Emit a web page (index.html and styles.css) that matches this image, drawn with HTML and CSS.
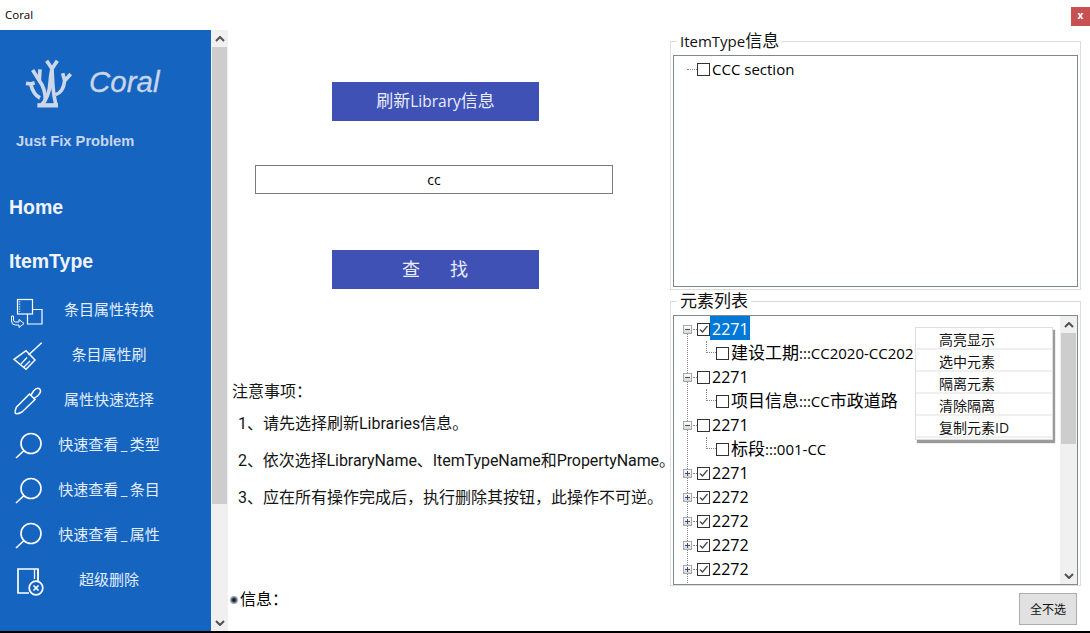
FILE: index.html
```html
<!DOCTYPE html>
<html lang="zh-CN">
<head>
<meta charset="utf-8">
<title>Coral</title>
<link rel="stylesheet" href="styles.css">
</head>
<body>
<div class="app">
  <header class="titlebar">
    <span class="title">Coral</span>
    <button class="close">x</button>
  </header>
  <div class="window">
    <aside class="sidebar">
      <div class="brand">
        <svg class="logo" viewBox="0 0 180 210" width="60" height="70" fill="none" stroke="#cdd7ea" stroke-width="11">
          <path d="M64 166 Q88 140 90 100 Q91 80 96 56 Q98 110 102 136 L108 166"/>
          <path d="M80 32 L96 56 L112 32"/>
          <path d="M76 150 Q76 116 58 92 L38 60 M58 92 L60 58"/>
          <path d="M60 144 Q40 134 32 102 L18 100 M32 102 L44 98"/>
          <path d="M106 134 Q130 128 134 92 L152 72 M134 92 L128 70"/>
          <path d="M52 166 L114 166" stroke-width="13"/>
        </svg>
        <span class="brand-name">Coral</span>
      </div>
      <div class="tagline">Just Fix Problem</div>
      <div class="section">Home</div>
      <div class="section">ItemType</div>
      <nav class="nav">
        <a class="nav-item">
          <svg class="nav-icon" viewBox="0 0 40 45" fill="none" stroke="#fff" stroke-width="1.2">
            <rect x="7.5" y="11.5" width="15" height="14.5"/>
            <path d="M22.5 21.5 H32 V36 H17.5 V26"/>
            <path d="M9.5 13 v11" stroke="#9fc0ea" stroke-width="1.5" stroke-dasharray="1.5 1"/>
            <path d="M3.5 28 v4 a2 2 0 0 0 2 2 h3.5 v-2.5 l5 4 l-5 4 v-2.5 h-3.5 a4 4 0 0 1 -4 -4 v-5 z" stroke-width="1"/>
          </svg>
          <span class="nav-label">条目属性转换</span>
        </a>
        <a class="nav-item">
          <svg class="nav-icon" viewBox="0 0 40 45" fill="none" stroke="#fff" stroke-width="1.5">
            <path d="M31.7 9.7 L18.5 22"/>
            <path d="M4 26.3 L16 17.7 L25 27 L16 36.3 Z"/>
            <path d="M11 31 L17 24.5 M14 34 L20 28" stroke-width="1.2"/>
          </svg>
          <span class="nav-label">条目属性刷</span>
        </a>
        <a class="nav-item">
          <svg class="nav-icon" viewBox="0 0 40 45" fill="none" stroke="#fff" stroke-width="1.5">
            <path d="M6.5 29 L19.5 16 L25 21.5 L12 34 Q7 36.5 5.5 35.5 Q4.5 33.5 6.5 29 Z"/>
            <path d="M21 17 L23.5 13 Q27 9 29.7 11 Q32 13.5 28 17.5 L24 20.5"/>
          </svg>
          <span class="nav-label">属性快速选择</span>
        </a>
        <a class="nav-item">
          <svg class="nav-icon" viewBox="0 0 40 45" fill="none" stroke="#fff" stroke-width="1.6">
            <circle cx="21" cy="20.5" r="10"/>
            <path d="M14 27.5 L6 35"/>
          </svg>
          <span class="nav-label">快速查看<span class="us">_</span>类型</span>
        </a>
        <a class="nav-item">
          <svg class="nav-icon" viewBox="0 0 40 45" fill="none" stroke="#fff" stroke-width="1.6">
            <circle cx="21" cy="20.5" r="10"/>
            <path d="M14 27.5 L6 35"/>
          </svg>
          <span class="nav-label">快速查看<span class="us">_</span>条目</span>
        </a>
        <a class="nav-item">
          <svg class="nav-icon" viewBox="0 0 40 45" fill="none" stroke="#fff" stroke-width="1.6">
            <circle cx="21" cy="20.5" r="10"/>
            <path d="M14 27.5 L6 35"/>
          </svg>
          <span class="nav-label">快速查看<span class="us">_</span>属性</span>
        </a>
        <a class="nav-item">
          <svg class="nav-icon" viewBox="0 0 40 45" fill="none" stroke="#fff" stroke-width="1.7">
            <path d="M19 35 H8 V11 H28 V23"/>
            <path d="M24.5 11 V21 M28 11 V21" stroke-width="1.3"/>
            <circle cx="26" cy="30" r="6.8"/>
            <path d="M23.5 27.5 L28.5 32.5 M28.5 27.5 L23.5 32.5"/>
          </svg>
          <span class="nav-label">超级删除</span>
        </a>
      </nav>
    </aside>

    <div class="vscroll">
      <div class="sb-btn"><svg width="10" height="6" viewBox="0 0 10 6" fill="none" stroke="#505050" stroke-width="2"><path d="M1 5 L5 1 L9 5"/></svg></div>
      <div class="sb-thumb main-thumb"></div>
      <div class="sb-track"></div>
      <div class="sb-btn"><svg width="10" height="6" viewBox="0 0 10 6" fill="none" stroke="#505050" stroke-width="2"><path d="M1 1 L5 5 L9 1"/></svg></div>
    </div>

    <main class="center">
      <button class="action first">刷新<span class="lat-btn">Library</span>信息</button>
      <input class="search" value="cc">
      <button class="action second">查&emsp;&ensp;找</button>
      <p class="note-title">注意事项：</p>
      <p class="note note-one">1、请先选择刷新Libraries信息。</p>
      <p class="note"><span class="fit">2、依次选择LibraryName、ItemTypeName和PropertyName。</span></p>
      <p class="note">3、应在所有操作完成后，执行删除其按钮，此操作不可逆。</p>
      <div class="info"><span class="dot"></span>信息：</div>
    </main>

    <section class="right">
      <fieldset class="group group-top">
        <legend><span class="lat">ItemType</span>信息</legend>
        <div class="treebox treebox-top">
          <div class="row row-root">
            <span class="hline"></span><span class="cb"></span><span class="label lat">CCC section</span>
          </div>
        </div>
      </fieldset>
      <fieldset class="group">
        <legend>元素列表</legend>
        <div class="treebox treebox-list">
          <div class="tree">
            <div class="row"><span class="exp minus"></span><span class="hline"></span><span class="cb checked"><svg viewBox="0 0 11 11" width="11" height="11" fill="none" stroke="#444" stroke-width="1.2"><path d="M2 5.5 L4.5 8 L9.5 2"/></svg></span><span class="label selected">2271</span></div>
            <div class="row child"><span class="elbow"></span><span class="cb"></span><span class="label">建设工期<span class="lat">:::CC2020-CC2021</span></span></div>
            <div class="row"><span class="exp minus"></span><span class="hline"></span><span class="cb"></span><span class="label">2271</span></div>
            <div class="row child"><span class="elbow"></span><span class="cb"></span><span class="label">项目信息<span class="lat">:::CC</span>市政道路</span></div>
            <div class="row"><span class="exp minus"></span><span class="hline"></span><span class="cb"></span><span class="label">2271</span></div>
            <div class="row child"><span class="elbow"></span><span class="cb"></span><span class="label">标段<span class="lat">:::001-CC</span></span></div>
            <div class="row"><span class="exp plus"></span><span class="hline"></span><span class="cb checked"><svg viewBox="0 0 11 11" width="11" height="11" fill="none" stroke="#444" stroke-width="1.2"><path d="M2 5.5 L4.5 8 L9.5 2"/></svg></span><span class="label">2271</span></div>
            <div class="row"><span class="exp plus"></span><span class="hline"></span><span class="cb checked"><svg viewBox="0 0 11 11" width="11" height="11" fill="none" stroke="#444" stroke-width="1.2"><path d="M2 5.5 L4.5 8 L9.5 2"/></svg></span><span class="label">2272</span></div>
            <div class="row"><span class="exp plus"></span><span class="hline"></span><span class="cb checked"><svg viewBox="0 0 11 11" width="11" height="11" fill="none" stroke="#444" stroke-width="1.2"><path d="M2 5.5 L4.5 8 L9.5 2"/></svg></span><span class="label">2272</span></div>
            <div class="row"><span class="exp plus"></span><span class="hline"></span><span class="cb checked"><svg viewBox="0 0 11 11" width="11" height="11" fill="none" stroke="#444" stroke-width="1.2"><path d="M2 5.5 L4.5 8 L9.5 2"/></svg></span><span class="label">2272</span></div>
            <div class="row"><span class="exp plus"></span><span class="hline"></span><span class="cb checked"><svg viewBox="0 0 11 11" width="11" height="11" fill="none" stroke="#444" stroke-width="1.2"><path d="M2 5.5 L4.5 8 L9.5 2"/></svg></span><span class="label">2272</span></div>
          </div>
          <div class="vscroll list-scroll">
            <div class="sb-btn"><svg width="10" height="6" viewBox="0 0 10 6" fill="none" stroke="#505050" stroke-width="2"><path d="M1 5 L5 1 L9 5"/></svg></div>
            <div class="sb-thumb list-thumb"></div>
            <div class="sb-track"></div>
            <div class="sb-btn"><svg width="10" height="6" viewBox="0 0 10 6" fill="none" stroke="#505050" stroke-width="2"><path d="M1 1 L5 5 L9 1"/></svg></div>
          </div>
          <ul class="menu">
            <li>高亮显示</li>
            <li>选中元素</li>
            <li>隔离元素</li>
            <li>清除隔离</li>
            <li>复制元素ID</li>
          </ul>
        </div>
      </fieldset>
      <div class="footer"><button class="plain">全不选</button></div>
    </section>
  </div>
</div>
</body>
</html>
```
FILE: styles.css
```css
* { box-sizing: border-box; }
html, body { margin: 0; padding: 0; background: #fff; }
body { font-family: "Open Sans", "Noto Sans CJK SC", sans-serif; color: #000; }
.app { width: 1090px; height: 633px; display: flex; flex-direction: column; overflow: hidden; }

.titlebar { height: 30px; display: flex; align-items: flex-start; justify-content: space-between; padding: 7px 0 0 5px; }
.title { font-size: 11.5px; line-height: 16px; }
.close { width: 19px; height: 19px; border: 0; padding: 0 0 3px; background: #c75050; color: #fff; font: bold 10px/14px "Open Sans", sans-serif; }

.window { height: 603px; display: flex; border-bottom: 2px solid #000; }

.sidebar { width: 211px; background: #1565c0; color: #fff; flex: none; }
.brand { display: flex; align-items: center; height: 70px; margin: 20px 0 0 20px; }
.brand-name { font: italic 29.5px/34px "Liberation Sans", sans-serif; color: #c9d5ea; margin: 0 0 6px 9px; -webkit-text-stroke: 0.3px #c9d5ea; }
.tagline { font: bold 14.7px/20px "Liberation Sans", sans-serif; color: #c9d5ea; margin: 11px 0 29px 16px; white-space: nowrap; }
.section { height: 54px; padding-left: 9px; font: bold 19.5px/54px "Liberation Sans", sans-serif; color: #f1f3fa; }
.nav-item { height: 45px; display: flex; align-items: center; padding: 0 43px 0 10px; }
.nav-icon { width: 40px; height: 45px; flex: none; }
.nav-label { flex: 1; text-align: center; font-size: 15px; line-height: 20px; color: #e4edfb; white-space: nowrap; padding-bottom: 4px; }
.us { margin: 0 2.5px; }

.vscroll { width: 17px; flex: none; display: flex; flex-direction: column; background: #f0f0f0; }
.sb-btn { height: 17px; display: flex; align-items: center; justify-content: center; flex: none; }
.sb-thumb { background: #cdcdcd; margin: 0 1px; flex: none; }
.main-thumb { height: 457px; }
.list-thumb { height: 111px; }
.sb-track { flex: 1; }

.center { width: 437px; flex: none; display: flex; flex-direction: column; align-items: flex-start; }
.action { width: 207px; height: 39px; border: 0; background: #3f51b5; color: #e8edfb; font-family: "Open Sans", "Noto Sans CJK SC", sans-serif; font-size: 17px; line-height: 24px; margin-left: 104px; padding: 0 0 2px; }
.lat-btn { font-size: 15.5px; }
.action.first { margin-top: 52px; }
.action.second { margin-top: 56px; font-size: 18px; letter-spacing: 1px; padding-bottom: 1px; }
.search { width: 358px; height: 29px; margin: 44px 0 0 27px; border: 1px solid #7a7a7a; text-align: center; font: 14px "Open Sans", sans-serif; color: #000; outline: 0; padding: 0; }
.note-title, .note { margin: 0; font-family: Roboto, "Noto Sans CJK SC", sans-serif; font-size: 16px; line-height: 24px; color: #151515; white-space: nowrap; }
.note-title { margin: 91px 0 0 4px; }
.note { margin: 13px 0 0 10px; }
.note.note-one { margin-top: 8px; }
.fit { letter-spacing: -0.07px; }
.info { display: flex; align-items: center; margin: 77px 0 0 2px; font-size: 16px; line-height: 24px; white-space: nowrap; }
.dot { width: 8px; height: 8px; border-radius: 50%; background: radial-gradient(circle, #1c2230 0 22%, #8d96a6 55%, #e3e0d6 100%); margin: 1px 2px 0 0; }

.right { flex: 1; padding-left: 5px; display: flex; flex-direction: column; }
.group { width: 411px; margin: 0; padding: 0 2px; border: 1px solid #dcdcdc; min-width: 0; }
.group legend { margin-left: 4px; padding: 0 3px; font-size: 17px; line-height: 22px; color: #111; }
.lat { font-size: 15px; }
.group-top { height: 260px; }
.treebox { width: 405px; border: 1px solid #828790; background: #fff; position: relative; }
.treebox-top { height: 232px; margin-top: 3px; padding-top: 1px; }
.treebox-list { height: 270px; margin-top: 3px; display: flex; }

.tree { flex: 1; min-width: 0; overflow: hidden; padding: 1px 0 0 9px;
  background: repeating-linear-gradient(to bottom, #888 0 1px, transparent 1px 2px) 13px 18px / 1px 100% no-repeat; }
.row { height: 24px; display: flex; align-items: center; font-size: 16px; white-space: nowrap; }
.row-root { padding-left: 13px; }
.row.child { margin-left: 23px; font-size: 17px; }
.exp { width: 9px; height: 9px; flex: none; border: 1px solid #a8a8a8; background: linear-gradient(#fff, #d8d8d8); position: relative; margin-right: 1px; }
.exp::before { content: ""; position: absolute; left: 1px; top: 3px; width: 5px; height: 1px; background: #3a4a80; }
.exp.plus::after { content: ""; position: absolute; left: 3px; top: 1px; width: 1px; height: 5px; background: #3a4a80; }
.hline { width: 4px; height: 0; border-bottom: 1px dotted #888; flex: none; }
.row-root .hline { width: 10px; }
.cb { width: 13px; height: 13px; flex: none; border: 1px solid #333; background: #fff; display: flex; align-items: center; justify-content: center; }
.cb svg { display: block; flex: none; }
.elbow { width: 10px; height: 12px; align-self: flex-start; flex: none; border-left: 1px dotted #888; border-bottom: 1px dotted #888; }
.label { padding: 0 2px; line-height: 24px; }
.label.selected { background: #0078d7; color: #fff; width: 40px; height: 24px; align-self: flex-start; margin-top: -1px; padding-top: 1px; }

.list-scroll { height: 268px; }

.menu { position: absolute; left: 241px; top: 11px; width: 138px; height: 113px; margin: 0; padding: 0; list-style: none; background: #fff; border: 1px solid #dedede; box-shadow: 2px 3px 1px #9a9a9a; }
.menu li { height: 22px; line-height: 23px; padding-left: 23px; font-size: 14px; color: #111; border-bottom: 2px solid #f0f0f0; white-space: nowrap; }

.footer { display: flex; justify-content: flex-end; padding: 7px 13px 0 0; }
.plain { width: 58px; height: 32px; background: #e1e1e1; border: 1px solid #adadad; padding: 0 0 1px; font-size: 12px; font-family: "Open Sans", "Noto Sans CJK SC", sans-serif; color: #111; }
```
